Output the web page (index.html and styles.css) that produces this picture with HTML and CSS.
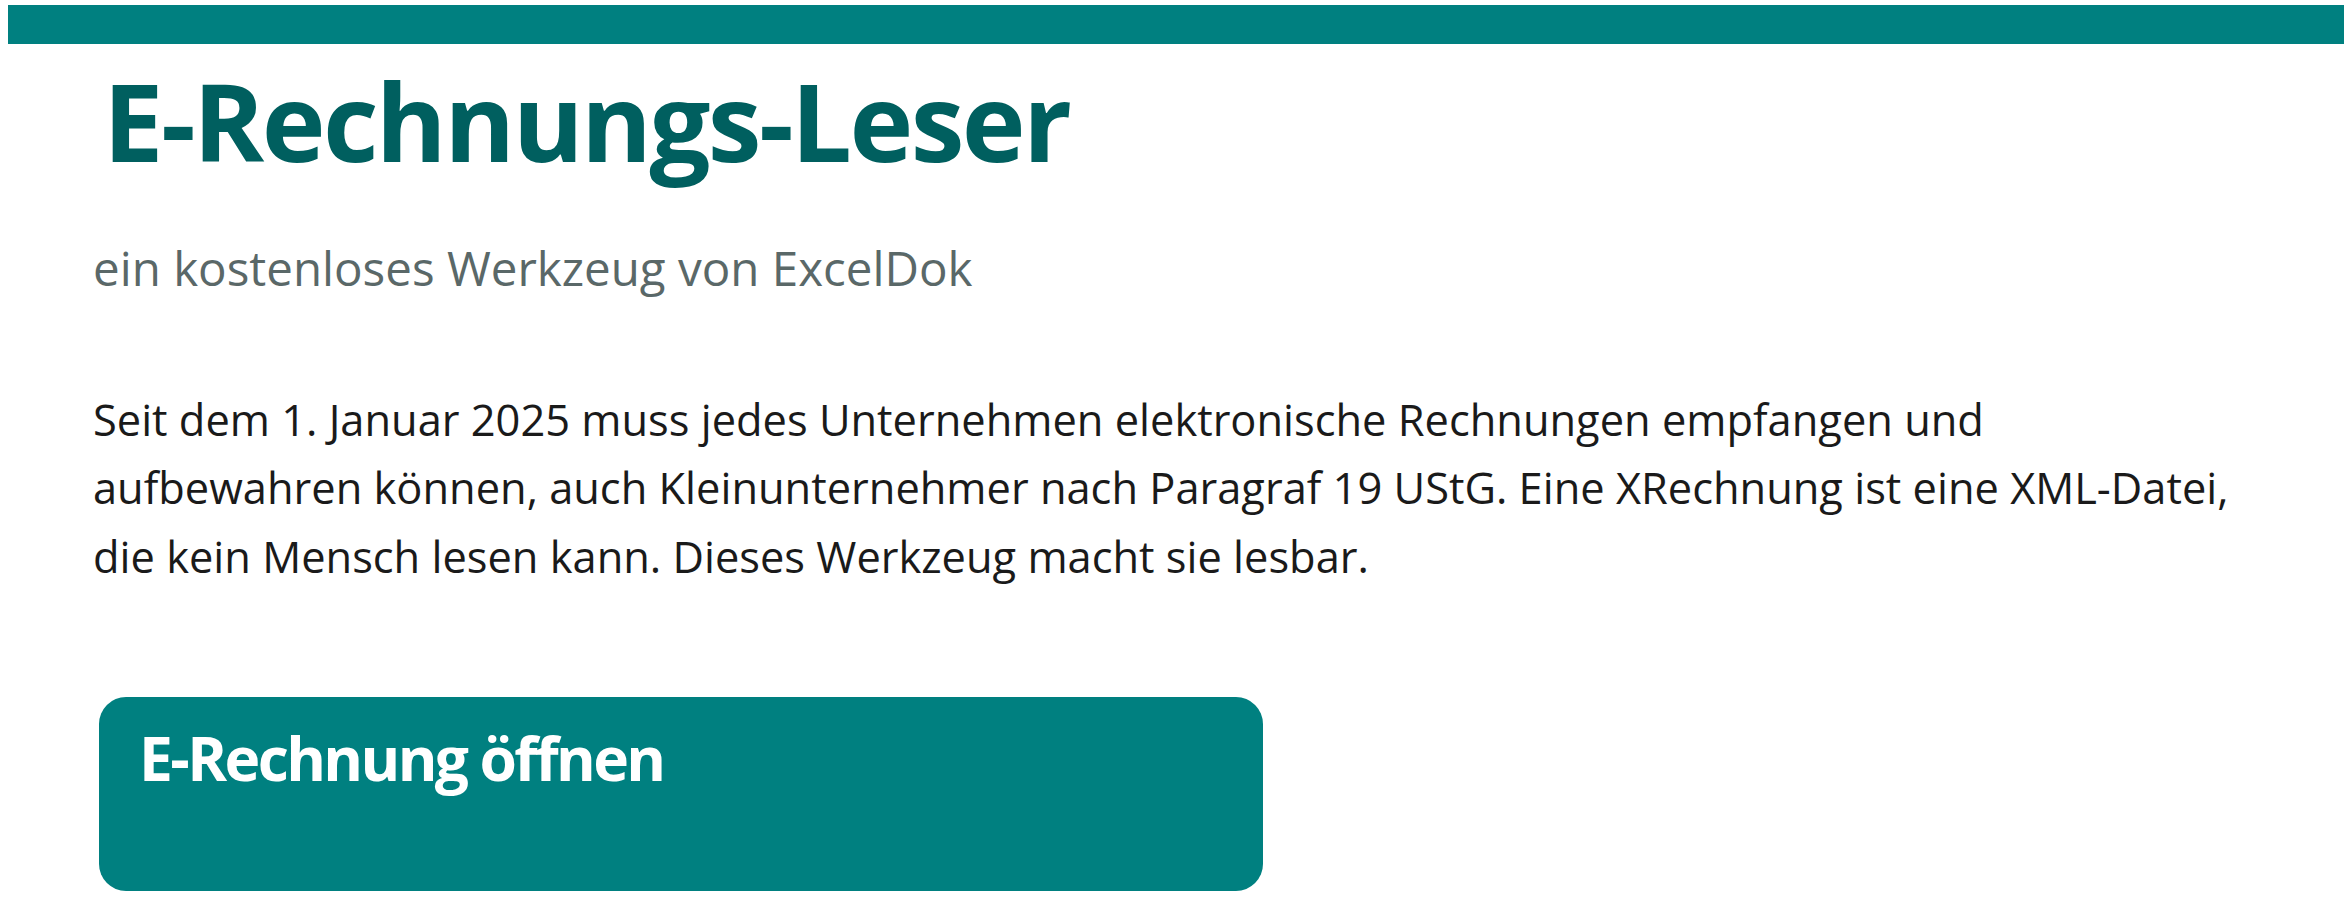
FILE: index.html
```html
<!DOCTYPE html>
<html lang="de">
<head>
<meta charset="utf-8">
<title>E-Rechnungs-Leser</title>
<link rel="stylesheet" href="styles.css">
</head>
<body>
<div class="topbar"></div>
<main class="content">
  <h1 class="title">E-Rechnungs-Leser</h1>
  <p class="subtitle">ein kostenloses Werkzeug von ExcelDok</p>
  <p class="intro">Seit dem 1. Januar 2025 muss jedes Unternehmen elektronische Rechnungen empfangen und aufbewahren können, auch Kleinunternehmer nach Paragraf 19 UStG. Eine XRechnung ist eine XML-Datei, die kein Mensch lesen kann. Dieses Werkzeug macht sie lesbar.</p>
  <section class="card">
    <h2 class="card-title">E-Rechnung öffnen</h2>
  </section>
</main>
</body>
</html>
```
FILE: styles.css
```css
html, body {
  margin: 0;
  padding: 0;
  background: #ffffff;
}
body {
  padding: 5px 8px 0 8px;
  font-family: "Open Sans", "Noto Sans", sans-serif;
  color: #1a1a1a;
}
.topbar {
  height: 39px;
  background: #008080;
}
.content {
  padding: 0 0 0 85px;
}
.title {
  margin: 12px 0 0 10px;
  font-size: 108px;
  line-height: 1.2;
  font-weight: 700;
  letter-spacing: -2.6px;
  color: #005f5f;
}
.subtitle {
  margin: 53px 0 0 0;
  font-size: 47.5px;
  line-height: 1.2;
  color: #5a6868;
}
.intro {
  margin: 90px 0 0 0;
  max-width: 2170px;
  font-size: 43.4px;
  line-height: 68.5px;
  color: #1a1a1a;
}
.card {
  margin: 106px 0 0 6px;
  width: 1164px;
  height: 194px;
  box-sizing: border-box;
  padding: 25px 40px;
  background: #008080;
  border-radius: 27px;
}
.card-title {
  margin: 0;
  font-size: 60.5px;
  line-height: 1.2;
  font-weight: 700;
  letter-spacing: -2.6px;
  color: #ffffff;
}
```
